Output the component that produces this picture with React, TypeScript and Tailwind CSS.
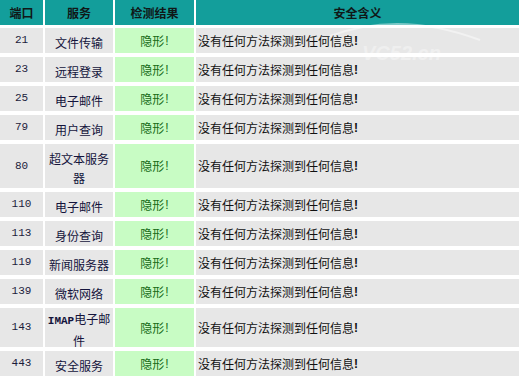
import React from "react";

type Row = { port: string; service: React.ReactNode; tall?: number };

const rows: Row[] = [
  { port: "21", service: "文件传输" },
  { port: "23", service: "远程登录" },
  { port: "25", service: "电子邮件" },
  { port: "79", service: "用户查询" },
  { port: "80", service: "超文本服务器", tall: 44 },
  { port: "110", service: "电子邮件" },
  { port: "113", service: "身份查询" },
  { port: "119", service: "新闻服务器" },
  { port: "139", service: "微软网络" },
  {
    port: "143",
    service: (
      <>
        <span className="text-[11px] font-bold font-['Liberation_Mono',monospace]">IMAP</span>电子邮件
      </>
    ),
    tall: 39,
  },
  { port: "443", service: "安全服务" },
];

export default function App() {
  return (
    <div className="w-[519px] h-[385px] bg-white relative overflow-hidden font-['Noto_Sans_CJK_SC',sans-serif] text-[12px]">
      {/* header */}
      <div className="flex gap-[2px] h-[25px] mb-[3px] bg-white">
        <div className="w-[43px] bg-[#139e9b] flex items-center justify-center font-bold text-[#101818]">端口</div>
        <div className="w-[68px] bg-[#139e9b] flex items-center justify-center font-bold text-[#101818]">服务</div>
        <div className="w-[79px] bg-[#139e9b] flex items-center justify-center font-bold text-[#101818]">检测结果</div>
        <div className="flex-1 bg-[#139e9b] flex items-center justify-center font-bold text-[#101818]">安全含义</div>
      </div>

      <div className="flex flex-col gap-[4px]">
        {rows.map((r) => (
          <div
            key={r.port}
            className="flex gap-[2px]"
            style={{ height: r.tall ?? 25 }}
          >
            <div className="w-[43px] bg-[#e7e7e7] flex items-center justify-center text-[11px] text-[#1c1c3c] font-['Liberation_Mono',monospace]">
              {r.port}
            </div>
            <div className="w-[68px] bg-[#e7e7e7] flex items-center justify-center text-center px-[1px] pt-[3px] leading-[19px] text-[#14143c] break-all">
              <span>{r.service}</span>
            </div>
            <div className="w-[79px] bg-[#c8fcc4] flex items-center justify-center text-[#166a16]">
              隐形<span className="font-['Liberation_Sans',sans-serif] ml-[1px]">!</span>
            </div>
            <div className="flex-1 bg-[#e7e7e7] flex items-center pl-[2px] text-[#111111]">
              没有任何方法探测到任何信息<span className="font-bold font-['Liberation_Sans',sans-serif]">!</span>
            </div>
          </div>
        ))}
      </div>

      {/* watermark */}
      <div className="absolute left-[362px] top-[38px] text-[20px] italic font-bold text-white/35 font-['Liberation_Sans',sans-serif] pointer-events-none">
        VC52.cn
      </div>
      <svg className="absolute left-[300px] top-[14px] pointer-events-none" width="200" height="40" viewBox="0 0 200 40">
        <path d="M30 22 Q100 -4 180 26" stroke="rgba(255,255,255,0.45)" strokeWidth="2" fill="none" />
      </svg>
    </div>
  );
}
